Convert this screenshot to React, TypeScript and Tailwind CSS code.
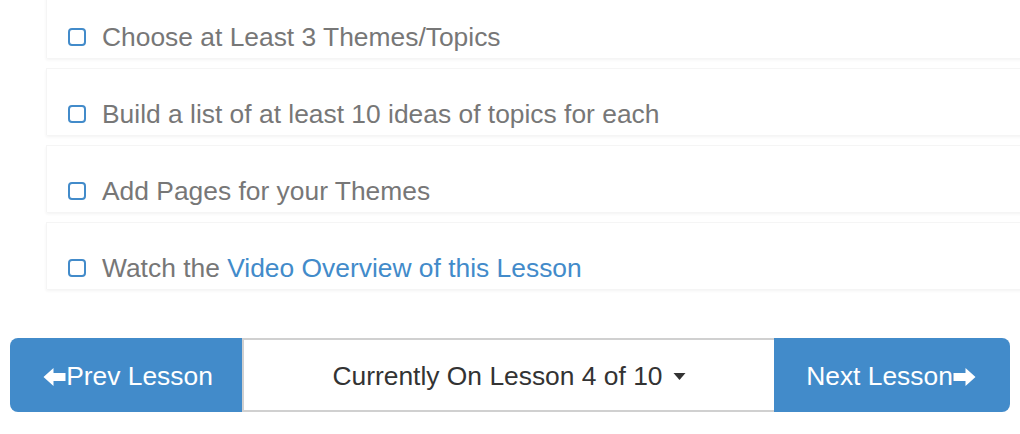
import React from "react";

const items: { text: string; link?: string }[] = [
  { text: "Choose at Least 3 Themes/Topics" },
  { text: "Build a list of at least 10 ideas of topics for each" },
  { text: "Add Pages for your Themes" },
  { text: "Watch the ", link: "Video Overview of this Lesson" },
];

function ArrowLeft() {
  return (
    <svg width="23" height="20" viewBox="0 0 22 20" className="inline-block">
      <path d="M0 10 L10 1 L10 6 L22 6 L22 14 L10 14 L10 19 Z" fill="#fff" />
    </svg>
  );
}
function ArrowRight() {
  return (
    <svg width="23" height="20" viewBox="0 0 22 20" className="inline-block">
      <path d="M22 10 L12 1 L12 6 L0 6 L0 14 L12 14 L12 19 Z" fill="#fff" />
    </svg>
  );
}

export default function App() {
  return (
    <div
      className="w-[1020px] h-[434px] bg-white overflow-hidden relative"
      style={{ fontFamily: '"Helvetica Neue", "Liberation Sans", Arial, sans-serif' }}
    >
      <div className="flex flex-col gap-[10px] mt-[-9px] ml-[46px] w-[990px]">
        {items.map((it, i) => (
          <div
            key={i}
            className="h-[67px] bg-white border-l border-t border-[#f5f5f5] shadow-[0_2px_3px_rgba(0,0,0,0.05)] pt-[28px] pl-[21px] flex items-start"
          >
            <div className="flex items-center h-[34px]">
              <span className="w-[18px] h-[18px] border-2 border-[#428bca] rounded-[4px] mr-[16px] box-border" />
              <span className="text-[26.4px] leading-[34px] text-[#777]">
                {it.text}
                {it.link && <span className="text-[#428bca]">{it.link}</span>}
              </span>
            </div>
          </div>
        ))}
      </div>
      <div className="flex mt-[49px] ml-[10px] w-[1000px] h-[74px]">
        <div className="w-[232px] bg-[#428bca] rounded-l-[8px] flex items-center justify-center text-white text-[26.4px] pl-[4px] pt-[3px]">
          <ArrowLeft />
          <span>Prev Lesson</span>
        </div>
        <div className="flex-1 bg-white border-y-2 border-l-2 border-[#d0d0d0] flex items-center justify-center text-[#333] text-[26.4px] pt-[3px]">
          <span>Currently On Lesson 4 of 10</span>
          <svg width="13" height="7" viewBox="0 0 12 7" className="ml-[10px]">
            <path d="M0 0 L12 0 L6 7 Z" fill="#333" />
          </svg>
        </div>
        <div className="w-[236px] bg-[#428bca] rounded-r-[8px] flex items-center justify-center text-white text-[26.4px] pr-[2px] pt-[3px]">
          <span>Next Lesson</span>
          <ArrowRight />
        </div>
      </div>
    </div>
  );
}
